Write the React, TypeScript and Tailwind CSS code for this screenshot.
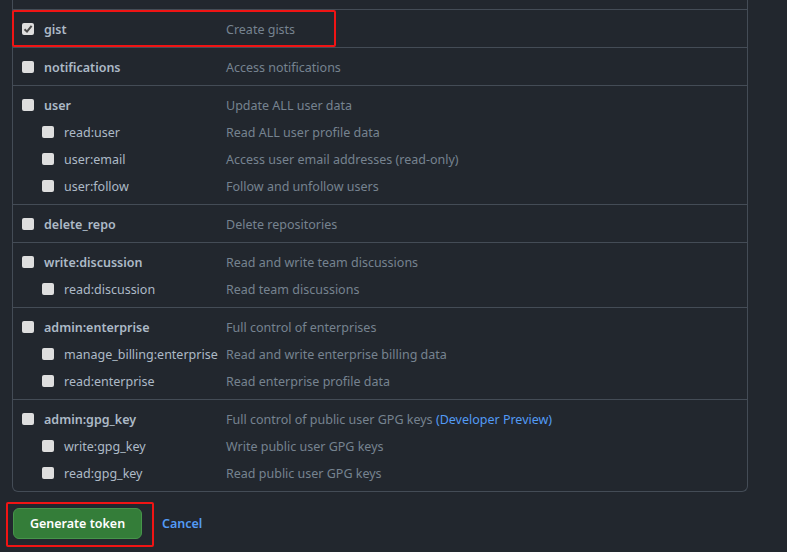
import type { ReactNode } from 'react';

type Scope = { name: string; desc: ReactNode; checked?: boolean };
type Group = { top: Scope; children?: Scope[] };

const groups: Group[] = [
  { top: { name: 'gist', desc: 'Create gists', checked: true } },
  { top: { name: 'notifications', desc: 'Access notifications' } },
  {
    top: { name: 'user', desc: 'Update ALL user data' },
    children: [
      { name: 'read:user', desc: 'Read ALL user profile data' },
      { name: 'user:email', desc: 'Access user email addresses (read-only)' },
      { name: 'user:follow', desc: 'Follow and unfollow users' },
    ],
  },
  { top: { name: 'delete_repo', desc: 'Delete repositories' } },
  {
    top: { name: 'write:discussion', desc: 'Read and write team discussions' },
    children: [{ name: 'read:discussion', desc: 'Read team discussions' }],
  },
  {
    top: { name: 'admin:enterprise', desc: 'Full control of enterprises' },
    children: [
      { name: 'manage_billing:enterprise', desc: 'Read and write enterprise billing data' },
      { name: 'read:enterprise', desc: 'Read enterprise profile data' },
    ],
  },
  {
    top: {
      name: 'admin:gpg_key',
      desc: (
        <>
          Full control of public user GPG keys{' '}
          <a className="text-[#539bf5]">(Developer Preview)</a>
        </>
      ),
    },
    children: [
      { name: 'write:gpg_key', desc: 'Write public user GPG keys' },
      { name: 'read:gpg_key', desc: 'Read public user GPG keys' },
    ],
  },
];

function Box({ checked }: { checked?: boolean }) {
  return (
    <span className="w-[12px] h-[12px] mt-[-4px] shrink-0 rounded-[2px] bg-[#dedede] flex items-center justify-center">
      {checked && (
        <svg width="10" height="10" viewBox="0 0 10 10">
          <path d="M1.5 5.2 L4 7.6 L8.6 1.8" fill="none" stroke="#4a4a4a" strokeWidth="2" />
        </svg>
      )}
    </span>
  );
}

function Row({ scope, child }: { scope: Scope; child?: boolean }) {
  return (
    <div className="flex items-center h-[27px]">
      <div className={`flex items-center w-[204px] ${child ? 'pl-[20px]' : ''}`}>
        <Box checked={scope.checked} />
        <span className={`ml-[10px] text-[#adbac7] ${child ? '' : 'font-semibold'}`}>
          {scope.name}
        </span>
      </div>
      <div className="text-[#768390]">{scope.desc}</div>
    </div>
  );
}

export default function App() {
  return (
    <div
      className="relative w-[787px] h-[552px] overflow-hidden bg-[#22272e] text-[12.5px]"
      style={{ fontFamily: '"Noto Sans", "Open Sans", sans-serif' }}
    >
      <div className="ml-[12px] w-[736px] border border-t-0 border-[#444c56] rounded-b-[6px]">
        <div className="h-[9px]" />
        {groups.map((g) => (
          <div key={g.top.name} className="border-t border-[#444c56] pt-[7px] pb-[3px] pl-[9px]">
            <Row scope={g.top} />
            {g.children?.map((c) => <Row key={c.name} scope={c} child />)}
          </div>
        ))}
      </div>

      <div className="flex items-center mt-[16px] ml-[13px] gap-[20px]">
        <button className="h-[31px] w-[129px] rounded-[6px] bg-[#347d39] border border-[#46954a] text-white font-semibold text-[12.5px] pt-[1px]">
          Generate token
        </button>
        <a className="text-[#539bf5] font-semibold pt-[1px]">Cancel</a>
      </div>

      {/* red annotation boxes */}
      <div className="absolute left-[12px] top-[10px] w-[324px] h-[37px] border-[2.5px] border-[#f01414] rounded-[2px] pointer-events-none" />
      <div className="absolute left-[6px] top-[502px] w-[148px] h-[45px] border-[2.5px] border-[#f01414] rounded-[2px] pointer-events-none" />
    </div>
  );
}
